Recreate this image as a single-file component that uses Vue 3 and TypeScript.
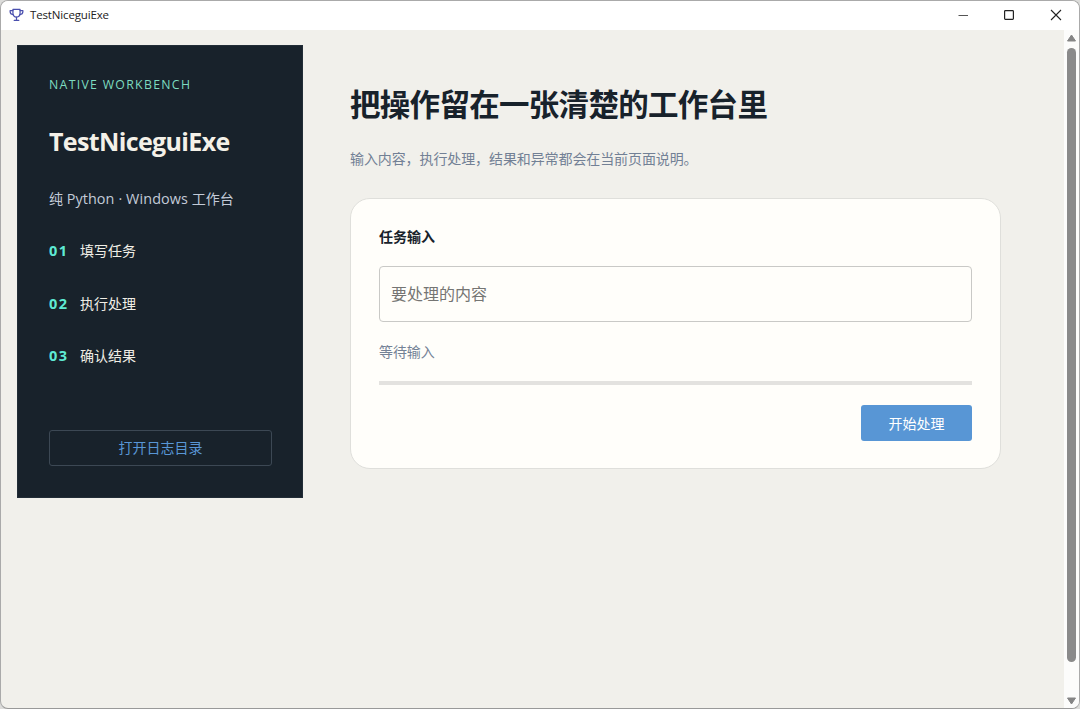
<script setup lang="ts">
import { ref } from 'vue'

interface Step {
  no: string
  label: string
}

const appName = 'TestNiceguiExe'
const steps: Step[] = [
  { no: '01', label: '填写任务' },
  { no: '02', label: '执行处理' },
  { no: '03', label: '确认结果' },
]
const content = ref('')
const status = ref('等待输入')
</script>

<template>
  <div class="window">
    <header class="titlebar">
      <svg class="logo" viewBox="0 0 16 14" fill="none" stroke="#4a4fae" stroke-width="1.3" stroke-linejoin="round" stroke-linecap="round">
        <path d="M4.2 1h7.6v4.2c0 2.3-1.6 4-3.8 4s-3.8-1.7-3.8-4z" />
        <path d="M4.2 2.3H1.200v1.200c0 1.700 1.200 2.800 3.200 3M11.800 2.300h3v1.200c0 1.700-1.200 2.800-3.200 3" />
        <path d="M8 9.200v3M5.500 12.700h5" />
      </svg>
      <span class="title">{{ appName }}</span>
      <div class="controls">
        <svg viewBox="0 0 12 12"><path d="M1.500 6.500h9.500" stroke="#555" /></svg>
        <svg viewBox="0 0 12 12"><rect x="1.600" y="1.600" width="8.800" height="8.800" rx=".8" stroke-width="1.200" /></svg>
        <svg viewBox="0 0 12 12"><path d="M1 1l10 10M11 1L1 11" stroke-width="1.100" /></svg>
      </div>
    </header>
    <div class="body">
      <div class="page">
        <aside class="side">
          <div class="eyebrow">NATIVE WORKBENCH</div>
          <h2 class="name">{{ appName }}</h2>
          <p class="sub">纯 <span class="latin">Python · Windows</span> 工作台</p>
          <ol class="steps">
            <li v-for="s in steps" :key="s.no"><b>{{ s.no }}</b><span>{{ s.label }}</span></li>
          </ol>
          <button class="log">打开日志目录</button>
        </aside>
        <main class="main">
          <h1>把操作留在一张清楚的工作台里</h1>
          <p class="desc">输入内容，执行处理，结果和异常都会在当前页面说明。</p>
          <section class="card">
            <h3>任务输入</h3>
            <input v-model="content" class="field" placeholder="要处理的内容" />
            <p class="status">{{ status }}</p>
            <div class="bar"></div>
            <button class="run">开始处理</button>
          </section>
        </main>
      </div>
      <div class="scroll">
        <svg viewBox="0 0 10 8"><path d="M5 1L9 7H1z" /></svg>
        <div class="thumb"></div>
        <svg class="down" viewBox="0 0 10 8"><path d="M5 7L1 1h8z" /></svg>
      </div>
    </div>
  </div>
</template>

<style>
body {
  background: #dcdcda;
  overflow: hidden;
}
</style>

<style scoped>
* {
  box-sizing: border-box;
  margin: 0;
  padding: 0;
}
.window {
  width: 1080px;
  height: 709px;
  display: flex;
  flex-direction: column;
  border: 1px solid #aaa;
  border-bottom-color: #999;
  border-radius: 8px;
  overflow: hidden;
  background: #f1f0eb;
  color: #18222b;
  font-family: "Open Sans", "Noto Sans CJK SC", sans-serif;
  font-size: 14px;
}
.titlebar {
  height: 29px;
  flex: none;
  display: flex;
  align-items: center;
  padding: 0 17px 1px 8px;
  background: #fff;
}
.logo {
  width: 15px;
  height: 14px;
}
.title {
  margin-left: 6px;
  font-size: 11.5px;
  line-height: 16px;
  letter-spacing: -0.15px;
  color: #222;
}
.controls {
  margin-left: auto;
  display: flex;
  gap: 34px;
}
.controls svg {
  width: 12px;
  height: 12px;
  fill: none;
  stroke: #222;
}
.controls svg:nth-child(-n + 2) {
  margin-right: 1px;
  margin-left: -1px;
}
.body {
  flex: 1;
  display: flex;
  min-height: 0;
}
.page {
  flex: 1;
  display: flex;
  align-items: flex-start;
  padding: 15px 0 0 16px;
}
.side {
  width: 286px;
  height: 453px;
  padding: 30px 31px 32px 32px;
  display: flex;
  flex-direction: column;
  background: #18222b;
  box-shadow: inset 0 0 0 1px #222d37;
}
.eyebrow {
  height: 20px;
  line-height: 20px;
  font-size: 12.3px;
  letter-spacing: 1.3px;
  color: #7ddcc0;
  white-space: nowrap;
}
.name {
  margin-top: 26px;
  height: 40px;
  line-height: 40px;
  font-size: 25px;
  font-weight: 700;
  letter-spacing: -0.63px;
  color: #f4f1e8;
}
.sub {
  margin-top: 27px;
  height: 22px;
  line-height: 22px;
  color: #c3cbd8;
  white-space: nowrap;
}
.latin {
  font-size: 14.4px;
  letter-spacing: 0.1px;
}
.steps {
  margin-top: 30px;
  list-style: none;
  display: grid;
  row-gap: 30.5px;
}
.steps li {
  display: flex;
  height: 22px;
  line-height: 22px;
  color: #f0eee6;
}
.steps b {
  width: 31px;
  font-size: 14.5px;
  letter-spacing: 1.4px;
  color: #5eead4;
}
.log {
  margin-top: auto;
  height: 36px;
  border: 1px solid #3c4854;
  border-radius: 3px;
  background: none;
  color: #5896d5;
  font: inherit;
  line-height: 34px;
}
.main {
  margin-left: 47px;
  width: 651px;
  padding-top: 36px;
}
h1 {
  height: 46px;
  line-height: 46px;
  font-size: 30.5px;
  letter-spacing: -0.7px;
  font-weight: 700;
  white-space: nowrap;
}
.desc {
  margin-top: 21px;
  height: 22px;
  line-height: 22px;
  letter-spacing: -0.1px;
  color: #728095;
}
.card {
  margin-top: 28px;
  height: 271px;
  padding: 27px 28px;
  display: flex;
  flex-direction: column;
  border: 1px solid #dfdfdb;
  border-radius: 20px;
  background: #fffefa;
}
h3 {
  height: 22px;
  line-height: 22px;
  font-size: 14px;
}
.field {
  margin-top: 18px;
  height: 56px;
  flex: none;
  padding: 0 11px;
  border: 1px solid #c9c9c6;
  border-radius: 4px;
  background: none;
  font: inherit;
  font-size: 16px;
}
.field::placeholder {
  color: #757573;
  opacity: 1;
}
.status {
  margin-top: 19px;
  height: 22px;
  line-height: 22px;
  letter-spacing: -0.1px;
  color: #748296;
}
.bar {
  margin-top: 18px;
  height: 4px;
  background: #e3e2df;
}
.run {
  margin-top: 20px;
  padding-bottom: 1px;
  align-self: flex-end;
  width: 111px;
  height: 36px;
  border: 0;
  border-radius: 3px;
  background: #5896d5;
  color: #fff;
  font: inherit;
}
.scroll {
  width: 15px;
  display: flex;
  flex-direction: column;
  align-items: center;
  padding: 4px 0 3px;
  background: #fcfcfb;
}
.scroll svg {
  width: 11px;
  height: 8px;
  fill: #858585;
  stroke: #858585;
  stroke-linejoin: round;
}
.thumb {
  width: 9px;
  height: 614px;
  margin-top: 6px;
  border-radius: 5px;
  background: #8a8a8a;
}
.down {
  margin-top: auto;
}
</style>
